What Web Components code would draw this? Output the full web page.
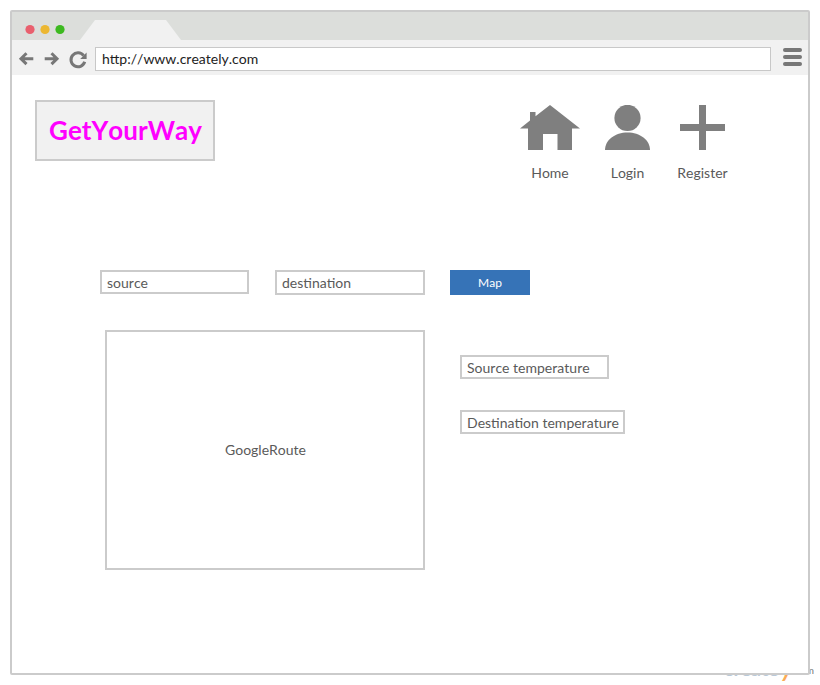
<!DOCTYPE html>
<html lang="en">
<head>
<meta charset="utf-8">
<title>GetYourWay</title>
<style>
html,body{margin:0;background:#fff}
body{width:820px;height:685px;overflow:hidden;position:relative;font:14px/20px Lato,"Liberation Sans",sans-serif;font-kerning:none;color:#5a5a5a}
</style>
</head>
<body>
<creately-mark></creately-mark>
<browser-window url="http://www.creately.com">
  <getyourway-page></getyourway-page>
</browser-window>
<script>
const define = (name, html) => customElements.define(name, class extends HTMLElement {
  constructor() {
    super();
    const t = document.createElement('template');
    t.innerHTML = html;
    this.attachShadow({mode: 'open'}).append(t.content.cloneNode(true));
  }
  connectedCallback() {
    for (const el of this.shadowRoot.querySelectorAll('[data-attr]'))
      el.textContent = this.getAttribute(el.dataset.attr) || '';
  }
});

define('creately-mark', `
<style>
:host{position:absolute;left:724px;top:652px;display:flex;align-items:flex-start;font-size:20px;line-height:30px;font-weight:700;color:#b9c9d8;white-space:nowrap}
span{width:57px;margin-top:2px;font-size:19.500px}
i{font-style:italic;font-weight:700;font-size:24px;color:#fbac55;width:12px;margin-top:1px}
small{font-size:10px;line-height:12px;font-weight:400;color:#777;margin-top:12px}
</style><span>create</span><i>y</i><small>.com</small>`);

define('nav-icons', `
<style>:host{display:flex;align-items:center;height:22px;width:83px}svg{display:block}</style>
<svg width="83" height="22" viewBox="12 48 83 22" fill="none" stroke="#777" stroke-width="3">
<path d="M21 58.7H33.3M26.5 53.3 21 58.7 26.5 64.1"/>
<path d="M44.7 58.7H57M51.5 53.3 57 58.7 51.5 64.1"/>
<path d="M83.6 55.6A7 7 0 1 0 84.7 61.8"/><path d="M86.6 52.6V59H80.2Z" fill="#777" stroke="none"/>
</svg>`);

define('menu-icon', `
<style>:host{display:flex;flex-direction:column;gap:3px;width:19px}b{height:4px;border-radius:2px;background:#777}</style><b></b><b></b><b></b>`);

define('browser-window', `
<style>
:host{display:flex;flex-direction:column;box-sizing:border-box;position:relative;width:800px;height:665px;margin:10px;border:2px solid #cbcbcb;border-radius:2px;background:#fff}
.tabs{display:flex;align-items:center;height:28px;background:#dcdedb}
.tabs svg{display:block;width:68px;height:28px}
.tab{width:102px;height:20px;align-self:flex-end;background:#f1f1f1;clip-path:polygon(15px 0,86px 0,101px 100%,0 100%)}
.bar{display:flex;align-items:center;height:35px;background:#f1f1f1}
.url{box-sizing:border-box;width:676px;height:24px;border:1px solid #c8c8c8;background:#fff;padding-left:6px;line-height:21px;color:#222;margin-top:3px}
menu-icon{margin:0 0 1px 12px}nav-icons{margin-top:3px}
</style>
<div class="tabs"><svg viewBox="0 0 68 28"><circle cx="18" cy="17.500" r="4.600" fill="#e9606e"/><circle cx="33" cy="17.500" r="4.600" fill="#ecb731"/><circle cx="48" cy="17.500" r="4.600" fill="#3cb91f"/></svg><div class="tab"></div></div>
<div class="bar"><nav-icons></nav-icons><div class="url" data-attr="url"></div><menu-icon></menu-icon></div>
<slot></slot>`);

define('nav-item', `
<style>:host{display:flex;flex-direction:column;align-items:center}slot{display:block;height:45px}span{margin-top:13px}</style>
<slot></slot><span data-attr="label"></span>`);

define('text-field', `
<style>:host{display:block;box-sizing:border-box;height:24px;border:2px solid #cbcbcb;background:#fff;padding-left:5px;line-height:22px;white-space:nowrap}</style><span data-attr="text"></span>`);

define('map-button', `
<style>:host{display:flex;align-items:center;justify-content:center;width:80px;height:25px;background:#3673b7;color:#fff;font-size:12px}</style><slot></slot>`);

define('route-panel', `
<style>:host{display:flex;align-items:center;justify-content:center;box-sizing:border-box;width:320px;height:240px;border:2px solid #cbcbcb;padding-left:1px}</style><slot></slot>`);

define('site-logo', `
<style>:host{display:flex;align-items:center;justify-content:center;box-sizing:border-box;width:180px;height:61px;border:2px solid #cbcbcb;background:#f1f1f1;color:#f0f;font-size:26px;font-weight:700;line-height:30px;padding:0 0 2px 1px}</style><slot></slot>`);

define('getyourway-page', `
<style>
:host{display:block}
header{display:flex;align-items:flex-start;box-sizing:border-box;padding:25px 0 0 23px;height:195px}
nav{display:flex;margin:5px 0 0 293px}
nav-item:nth-child(1){width:60px;margin-left:12px}
nav-item:nth-child(2){width:45px;margin-left:25px}
nav-item:nth-child(3){width:51px;margin-left:27px}
svg{display:block;fill:#7f7f7f}
.search{display:flex;align-items:flex-start;padding-left:88px;height:60px}
.dest{width:150px;height:25px;margin:0 25px 0 26px}
.result{display:flex;padding-left:93px}
.temps{display:flex;flex-direction:column;align-items:flex-start;gap:31px;padding:25px 0 0 35px}
</style>
<header>
<site-logo>GetYourWay</site-logo>
<nav>
<nav-item label="Home"><svg width="60" height="45"><path d="M30 0 60 23.500H52V45H37.500V29H23V45H8V23.500H0L10 15.500V7H15.500V11.300Z"/></svg></nav-item>
<nav-item label="Login"><svg width="45" height="45"><circle cx="22.500" cy="12.900" r="13.100"/><path d="M0 45C0 35 10 27.500 22.500 27.500S45 35 45 45Z"/></svg></nav-item>
<nav-item label="Register"><svg width="45" height="45"><path d="M19 0H26V19H45V26H26V45H19V26H0V19H19Z"/></svg></nav-item>
</nav>
</header>
<div class="search"><text-field style="width:149px" text="source"></text-field><text-field class="dest" text="destination"></text-field><map-button>Map</map-button></div>
<div class="result"><route-panel>GoogleRoute</route-panel>
<div class="temps"><text-field style="width:149px" text="Source temperature"></text-field><text-field style="width:165px" text="Destination temperature"></text-field></div></div>`);
</script>
</body>
</html>
